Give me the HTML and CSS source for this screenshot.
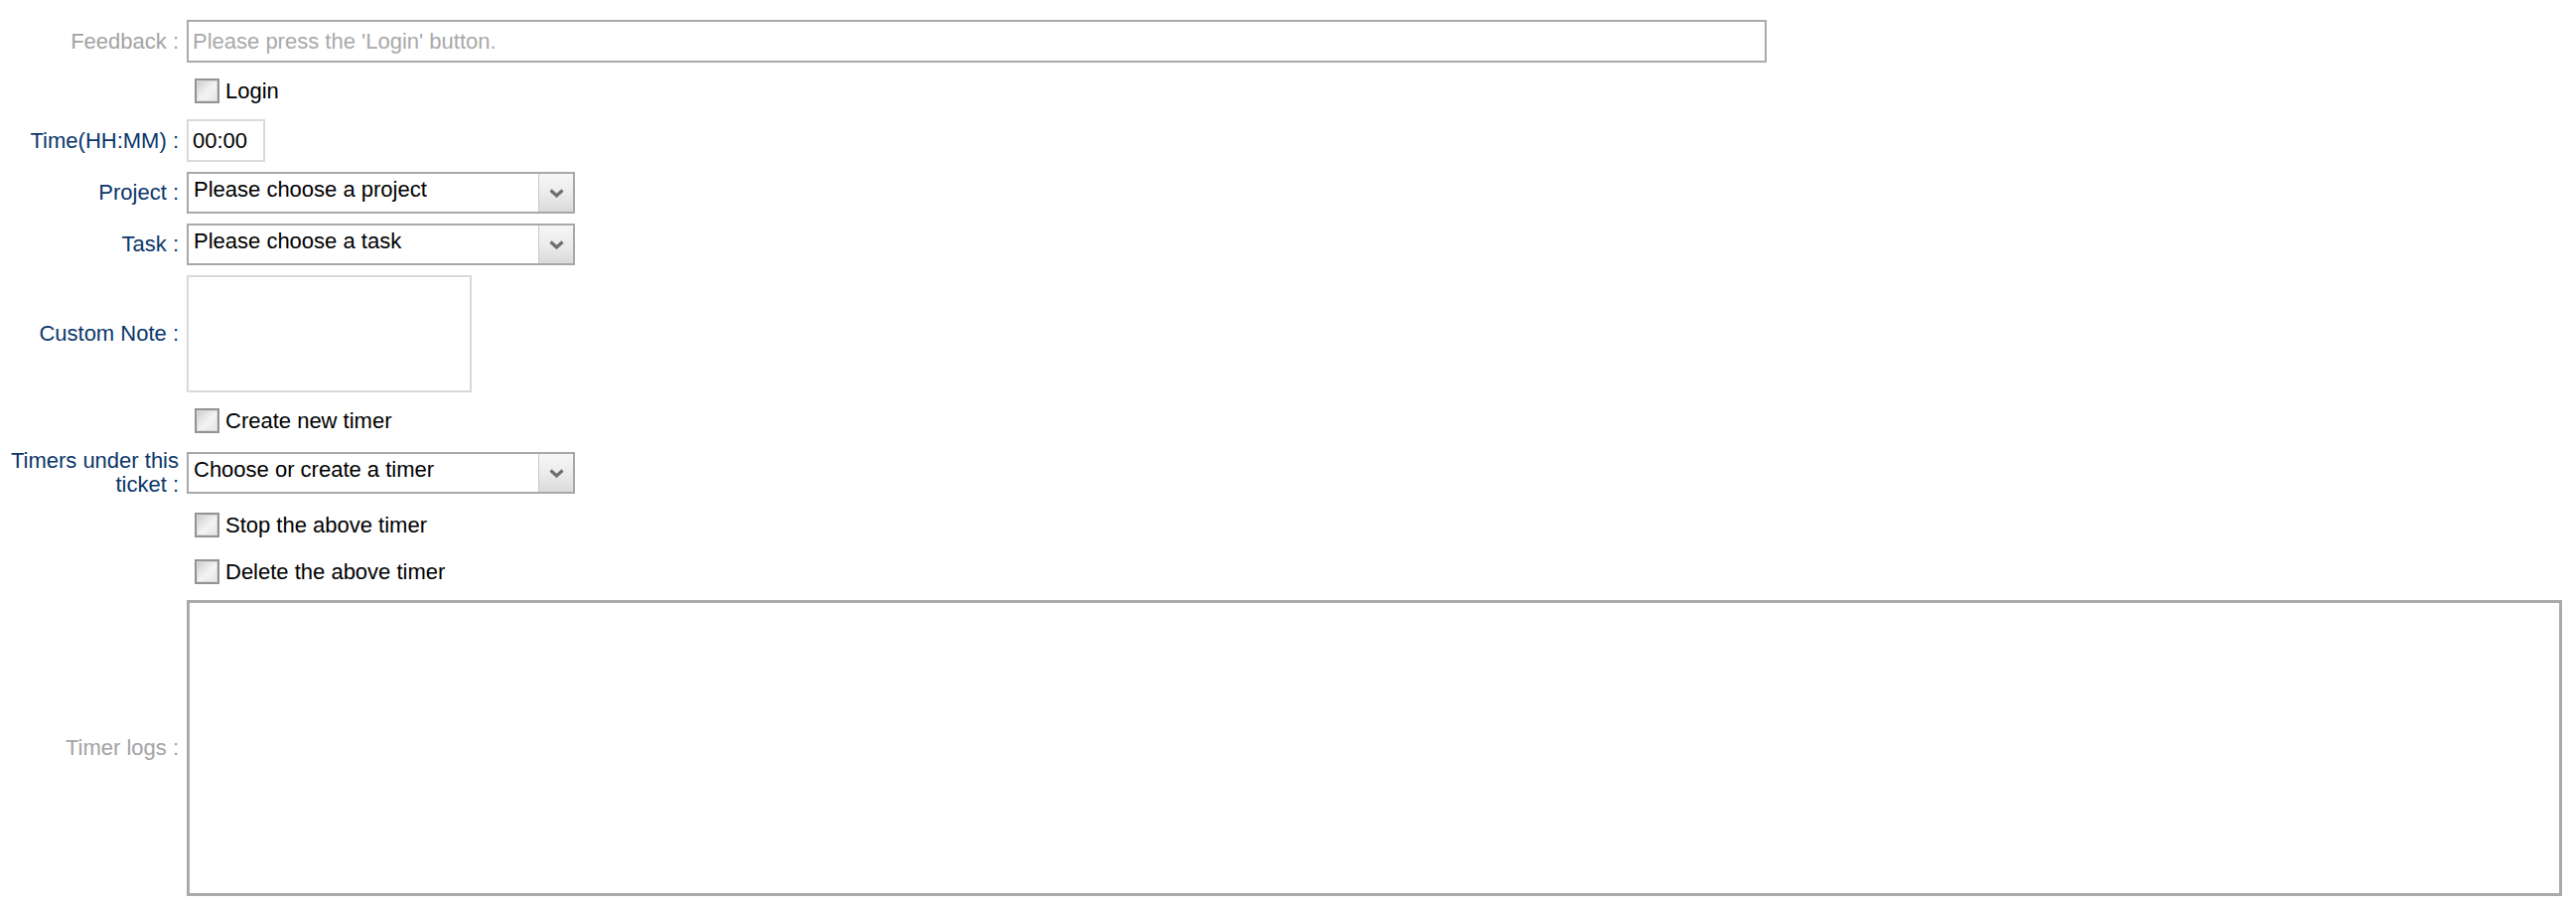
FILE: index.html
```html
<!DOCTYPE html>
<html>
<head>
<meta charset="utf-8">
<link rel="stylesheet" href="styles.css">
</head>
<body>
<form class="form">
  <label class="lbl muted">Feedback :</label>
  <div class="field"><div class="text-box feedback">Please press the 'Login' button.</div></div>

  <div></div>
  <div class="field check-row"><span class="chk"></span><span>Login</span></div>

  <label class="lbl">Time(HH:MM) :</label>
  <div class="field"><div class="time-box">00:00</div></div>

  <label class="lbl">Project :</label>
  <div class="field"><div class="select"><span class="sel-val">Please choose a project</span><span class="sel-btn"><svg width="15" height="9" viewBox="0 0 15 9"><path d="M1.5 1.5 L7.5 7 L13.5 1.5" fill="none" stroke="#6e6e6e" stroke-width="3.2"/></svg></span></div></div>

  <label class="lbl">Task :</label>
  <div class="field"><div class="select"><span class="sel-val">Please choose a task</span><span class="sel-btn"><svg width="15" height="9" viewBox="0 0 15 9"><path d="M1.5 1.5 L7.5 7 L13.5 1.5" fill="none" stroke="#6e6e6e" stroke-width="3.2"/></svg></span></div></div>

  <label class="lbl">Custom Note :</label>
  <div class="field"><div class="note"></div></div>

  <div></div>
  <div class="field check-row"><span class="chk"></span><span>Create new timer</span></div>

  <label class="lbl">Timers under this ticket :</label>
  <div class="field"><div class="select"><span class="sel-val">Choose or create a timer</span><span class="sel-btn"><svg width="15" height="9" viewBox="0 0 15 9"><path d="M1.5 1.5 L7.5 7 L13.5 1.5" fill="none" stroke="#6e6e6e" stroke-width="3.2"/></svg></span></div></div>

  <div></div>
  <div class="field check-row"><span class="chk"></span><span>Stop the above timer</span></div>

  <div></div>
  <div class="field check-row"><span class="chk"></span><span>Delete the above timer</span></div>

  <label class="lbl muted">Timer logs :</label>
  <div class="field"><div class="logs"></div></div>
</form>
</body>
</html>
```
FILE: styles.css
```css
html, body {
  margin: 0;
  padding: 0;
  background: #ffffff;
}
body {
  padding: 20px 8px 0 8px;
  font-family: "Liberation Sans", Arial, sans-serif;
  font-size: 22px;
  color: #000;
}
.form {
  display: grid;
  grid-template-columns: 172px 1fr;
  column-gap: 8px;
  row-gap: 10px;
  align-items: center;
}
.lbl {
  text-align: right;
  color: #0b376b;
  line-height: 24px;
}
.lbl.muted {
  color: #a3a3a3;
}
.field {
  display: flex;
  align-items: center;
}
.text-box {
  box-sizing: border-box;
  height: 43px;
  border: 2px solid #aaaaaa;
  padding: 0 4px;
  line-height: 39px;
  color: #a9a9a9;
}
.feedback {
  width: 1591px;
}
.check-row {
  height: 37px;
  padding-left: 8px;
  gap: 6px;
}
.chk {
  box-sizing: border-box;
  width: 25px;
  height: 25px;
  border: 2px solid #939393;
  background: linear-gradient(135deg, #c9c9c9 0%, #e6e6e8 35%, #f3f3f5 55%, #e2e2e2 100%);
  box-shadow: inset 0 0 0 1px #dadada;
}
.time-box {
  box-sizing: border-box;
  width: 79px;
  height: 43px;
  border: 2px solid #d9d9d9;
  padding: 0 4px;
  line-height: 39px;
}
.select {
  box-sizing: border-box;
  width: 391px;
  height: 42px;
  border: 2px solid #a8a8a8;
  display: flex;
  align-items: stretch;
}
.sel-val {
  flex: 1;
  padding: 0 5px;
  line-height: 31px;
}
.sel-btn {
  width: 34px;
  border-left: 1px solid #c8c8c8;
  background: linear-gradient(to bottom, #f6f6f6 0%, #ececec 50%, #dadada 100%);
  display: flex;
  align-items: center;
  justify-content: center;
}
.note {
  box-sizing: border-box;
  width: 287px;
  height: 118px;
  border: 2px solid #d9d9d9;
}
.logs {
  box-sizing: border-box;
  width: 2392px;
  height: 298px;
  border: 3px solid #aaaaaa;
}
```
